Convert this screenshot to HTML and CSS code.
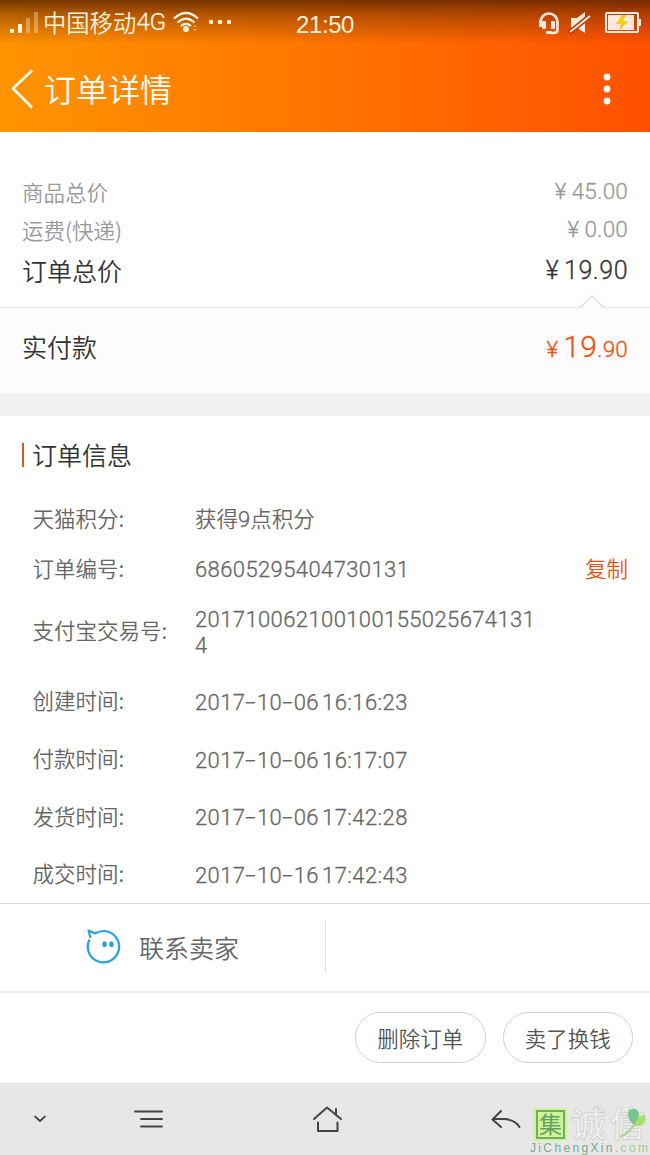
FILE: index.html
```html
<!DOCTYPE html>
<html lang="zh-CN">
<head>
<meta charset="utf-8">
<title>订单详情</title>
<link rel="stylesheet" href="styles.css">
</head>
<body>
<div class="screen">
  <header class="header">
    <div class="status">
      <svg class="signal" width="28" height="23" viewBox="0 0 28 23"><g fill="#fff3df"><rect x="0" y="18" width="4" height="4"/><rect x="8" y="13" width="4" height="9"/><rect x="16" y="7" width="4" height="15" opacity=".35"/><rect x="24" y="1" width="4" height="21" opacity=".35"/></g></svg>
      <span class="carrier">中国移动<span class="net">4G</span></span>
      <svg class="wifi" width="26" height="22" viewBox="0 0 26 22"><g fill="none" stroke="#fff3df" stroke-width="2.2"><path d="M1 7.5Q13-3.5 25 7.5"/><path d="M4.5 11.5Q13 3.7 21.500 11.500"/><path d="M8 15Q13 10.700 18 15"/></g><circle cx="13" cy="18" r="3" fill="#fff3df"/><g fill="#fff3df" opacity=".45"><path d="M20 16l2-2 2 2zM20 18l2 2 2-2z"/></g></svg>
      <svg class="more" width="24" height="6" viewBox="0 0 24 6"><g fill="#fff3df"><circle cx="3" cy="3" r="2.300"/><circle cx="12" cy="3" r="2.300"/><circle cx="21" cy="3" r="2.300"/></g></svg>
      <span class="clock">21:50</span>
      <svg class="tray" width="103" height="24" viewBox="0 0 103 24">
        <path d="M2.500 13V11a8.500 8.500 0 0 1 17 0v8q0 3-4 3h-3" fill="none" stroke="#ffe9dc" stroke-width="2.600"/>
        <g fill="#ffe9dc"><rect x="1" y="9" width="3" height="7"/><rect x="4" y="10" width="4" height="8" rx="1"/><rect x="13" y="10" width="4" height="8" rx="1"/><rect x="8" y="20" width="6" height="3" rx="1"/><path d="M33 7h6l8-6v21l-8-5h-6z"/></g>
        <path d="M31 22L53 4" stroke="#bc3d00" stroke-width="5"/><path d="M32 21L52 5" stroke="#ffe9dc" stroke-width="2"/>
        <rect x="68" y="2" width="32" height="19" rx="1" fill="none" stroke="#ffe9dc" stroke-width="2"/><path fill="#ffe9dc" d="M70 4h26v15H70zM101 8h2v7h-2z"/><path fill="#f8c915" d="M84 4l-6 9h5l-2 7 9-10h-5l3-6z"/>
      </svg>
    </div>
    <div class="titlebar">
      <svg width="24" height="42" viewBox="0 0 24 42"><path d="M22 2.500L3 20.500L22 39.500" fill="none" stroke="#fff" stroke-width="2.500"/></svg>
      <h1>订单详情</h1>
      <svg class="menu" width="8" height="32" viewBox="0 0 8 32"><g fill="#fff"><circle cx="4" cy="4" r="3.400"/><circle cx="4" cy="16" r="3.400"/><circle cx="4" cy="28" r="3.400"/></g></svg>
    </div>
  </header>

  <section class="prices">
    <div class="price"><span>商品总价</span><span class="amount"><i class="yen">¥</i>45.00</span></div>
    <div class="price"><span>运费(快递)</span><span class="amount"><i class="yen">¥</i>0.00</span></div>
    <div class="price total"><span>订单总价</span><span class="amount"><i class="yen">¥</i>19.90</span></div>
  </section>
  <section class="paid">
    <svg class="caret" width="26" height="14" viewBox="0 0 26 14"><path d="M1 13L13 1L25 13V14H1z" fill="#fcfcfc"/><path d="M1 12.500L13 1L25 12.500" fill="none" stroke="#dedede" stroke-width="1.300"/></svg>
    <span>实付款</span>
    <span class="amount hot"><i class="yen">¥</i><b>19</b>.90</span>
  </section>
  <div class="band"></div>

  <section class="info">
    <h2>订单信息</h2>
    <dl>
      <div class="row"><dt>天猫积分:</dt><dd class="zh">获得<span class="nine">9</span>点积分</dd></div>
      <div class="row"><dt>订单编号:</dt><dd>68605295404730131</dd><a class="copy">复制</a></div>
      <div class="row two"><dt>支付宝交易号:</dt><dd>201710062100100155025674131<br>4</dd></div>
      <div class="row time"><dt>创建时间:</dt><dd>2017<i class="hy">-</i>10<i class="hy">-</i>06 16:16:23</dd></div>
      <div class="row time"><dt>付款时间:</dt><dd>2017<i class="hy">-</i>10<i class="hy">-</i>06 16:17:07</dd></div>
      <div class="row time"><dt>发货时间:</dt><dd>2017<i class="hy">-</i>10<i class="hy">-</i>06 17:42:28</dd></div>
      <div class="row time"><dt>成交时间:</dt><dd>2017<i class="hy">-</i>10<i class="hy">-</i>16 17:42:43</dd></div>
    </dl>
  </section>

  <section class="contact">
    <div class="seller">
      <svg width="36" height="36" viewBox="0 0 36 36"><path d="M4.500 9L2.500 1.500L9 4.500Q13 2 18 2A15.700 15.700 0 1 1 3.500 10.500" fill="none" stroke="#25a2df" stroke-width="2.200" stroke-linejoin="round"/><ellipse cx="18.500" cy="15.300" rx="2.200" ry="3" fill="#25a2df"/><ellipse cx="25.500" cy="15.300" rx="2.200" ry="3" fill="#25a2df"/></svg>
      <span>联系卖家</span>
    </div>
  </section>
  <section class="actions"><button>删除订单</button><button>卖了换钱</button></section>

  <nav class="nav">
    <svg class="icons" width="530" height="72" viewBox="0 0 530 72"><g fill="none" stroke="#444" stroke-width="2" stroke-linecap="round" stroke-linejoin="round"><path stroke-width="1.700" d="M35 33.500l5 4.500 5-4.500"/><path d="M135 28.500h27M141 36h21M141 43.500h21"/><path d="M314 36l13-11.500L341 36M336 26v5M318 39.500V48h19.500v-8.500"/><path d="M501 28l-8.500 8.500L501 44M493 36h12q10 1 14.500 8"/></g></svg>
    <div class="mark">
      <div class="marktop"><span class="seal">集</span><span class="cx">诚</span><span class="cx">信</span></div>
      <div class="domain">JiChengXin<span>.com</span></div>
      <svg class="leaf" width="29" height="34" viewBox="0 0 29 34"><path d="M1 31Q10 27 15 19" fill="none" stroke="#a8d78a" stroke-width="2"/><path d="M16 20Q6 12 10 4q8-4 10 4 0 6-4 12z" fill="#79c38d"/><path d="M15 20Q18 9 26 9q3 12-11 11z" fill="#a7df6d"/></svg>
    </div>
  </nav>
</div>
</body>
</html>
```
FILE: styles.css
```css
* { box-sizing: border-box; }
body, h1, h2, dl, dt, dd { margin: 0; font-weight: 350; }
body { background: #fff; color: #333; }
svg { display: block; flex: none; }
.screen { width: 650px; height: 1155px; display: flex; flex-direction: column; overflow: hidden; font-family: "Noto Sans CJK SC", sans-serif; }
.screen > * { flex: none; }
.header { height: 132px; background: linear-gradient(rgba(95,38,0,.85), rgba(110,45,0,.48) 16px, rgba(130,50,0,0) 44px), linear-gradient(90deg, #ff9400, #ff7400 50%, #ff5000); color: #fff; }
.status { height: 46px; display: flex; align-items: center; padding-left: 10px; color: #fff3df; }
.signal, .wifi, .more { margin-top: -2px; }
.carrier { margin: -3px 0 0 5px; font-size: 23.3px; line-height: 44px; width: 130px; white-space: nowrap; display: flex; align-items: center; }
.net { font-family: Roboto, sans-serif; font-size: 24.500px; letter-spacing: -.3px; padding-top: 1px; -webkit-text-stroke: .3px; }
.more { margin-left: 9px; }
.clock { margin: 3px 0 0 64px; width: 64px; font-family: "Liberation Sans", sans-serif; font-size: 24px; letter-spacing: -.4px; }
.tray { margin: -1px 0 0 178px; }
.titlebar { height: 86px; display: flex; align-items: center; padding-left: 10px; }
.titlebar h1 { margin-left: 10px; font-size: 32px; line-height: 44px; padding-bottom: 3px; }
.menu { margin-left: auto; margin-right: 39px; }
.prices { height: 176px; border-bottom: 1px solid #e3e3e3; padding: 40px 22px 0; }
.price { height: 38px; display: flex; justify-content: space-between; align-items: center; font-size: 21.500px; line-height: 30px; color: #999; }
.price > span:first-child { padding-top: 1px; }
.price.total { height: 45px; font-size: 25px; color: #333; }
.price.total > span:first-child { padding: 0 0 1px; }
.amount { font-family: Roboto, sans-serif; font-size: 22.500px; display: flex; align-items: baseline; letter-spacing: .2px; -webkit-text-stroke: .3px; }
.total .amount { font-size: 25px; letter-spacing: .5px; padding-top: 1px; }
.yen { font-style: normal; margin-right: 5px; }
.paid { position: relative; height: 85px; padding: 0 22px 9px; background: #fcfcfc; display: flex; justify-content: space-between; align-items: center; font-size: 25px; }
.paid .amount { padding-top: 1px; }
.caret { position: absolute; right: 45px; top: -13px; }
.hot { color: #f0500f; }
.hot b { font-weight: 350; font-size: 30px; letter-spacing: .2px; }
.band { height: 23px; background: #f1f1f1; }
.info { height: 488px; border-bottom: 1px solid #d8d8d8; padding: 26px 22px 0; }
.info h2 { display: flex; align-items: center; height: 26px; font-size: 25px; line-height: 26px; padding-bottom: 3px; }
.info h2::before { content: ""; width: 2px; height: 24px; background: #e75512; margin: 3px 8px 0 0; }
.info dl { padding: 27px 0 0 10.500px; }
.row { height: 49.500px; display: flex; align-items: center; font-size: 21.500px; line-height: 26px; color: #666; }
.row dt { width: 162.500px; flex: none; white-space: nowrap; padding-bottom: 3px; }
.row dd { font-family: Roboto, sans-serif; font-size: 22px; letter-spacing: .4px; word-spacing: -2.500px; line-height: 26px; padding-top: 2px; -webkit-text-stroke: .3px; }
.row dd.zh { font-family: "Noto Sans CJK SC", sans-serif; font-size: 21.500px; letter-spacing: 0; padding: 0 0 1px; -webkit-text-stroke: 0; }
.nine { font-family: Roboto, sans-serif; font-size: 22px; -webkit-text-stroke: .3px; }
.hy { display: inline-block; width: 11.500px; text-align: center; font-style: normal; transform: scaleX(1.700); }
.copy { margin-left: auto; color: #f0500f; padding-bottom: 2px; }
.row.two { height: 79px; padding-bottom: 4px; }
.row.time { height: 57.700px; }
.contact { height: 89px; border-bottom: 2px solid #eee; display: flex; align-items: center; padding-bottom: 1px; }
.seller { width: 326px; height: 52px; border-right: 1px solid #e2e2e2; display: flex; align-items: center; padding-left: 86px; gap: 17px; font-size: 25px; line-height: 30px; color: #666; }
.actions { height: 90px; display: flex; justify-content: flex-end; align-items: center; gap: 17px; padding: 0 17px 1px 0; }
.actions button { width: 130.500px; height: 51px; margin: 0; padding: 0; border: 1px solid #d0d0d0; border-radius: 26px; background: #fff; font: 350 21.500px/30px "Noto Sans CJK SC", sans-serif; color: #555; }
.nav { height: 72px; background: #e7e7e7; display: flex; }
.mark { position: relative; width: 120px; padding-top: 24px; }
.marktop { display: flex; height: 34px; padding-left: 6px; align-items: center; }
.seal { width: 29px; height: 29px; border: 2px solid #77aa69; outline: 2px solid #cdf598; background: #cdf598; color: #669e63; font-size: 23px; line-height: 23px; text-align: center; font-weight: 400; margin-right: 6px; }
.cx { width: 39px; font-size: 35px; line-height: 29px; height: 34px; font-weight: 500; color: #f1f1f1; -webkit-text-stroke: .8px #d0d0d0; }
.domain { font: 400 12px/15px "Liberation Sans", sans-serif; letter-spacing: 2.350px; color: #79a991; white-space: nowrap; }
.domain span { color: #a7c795; }
.leaf { position: absolute; left: 89px; top: 23px; }
```
